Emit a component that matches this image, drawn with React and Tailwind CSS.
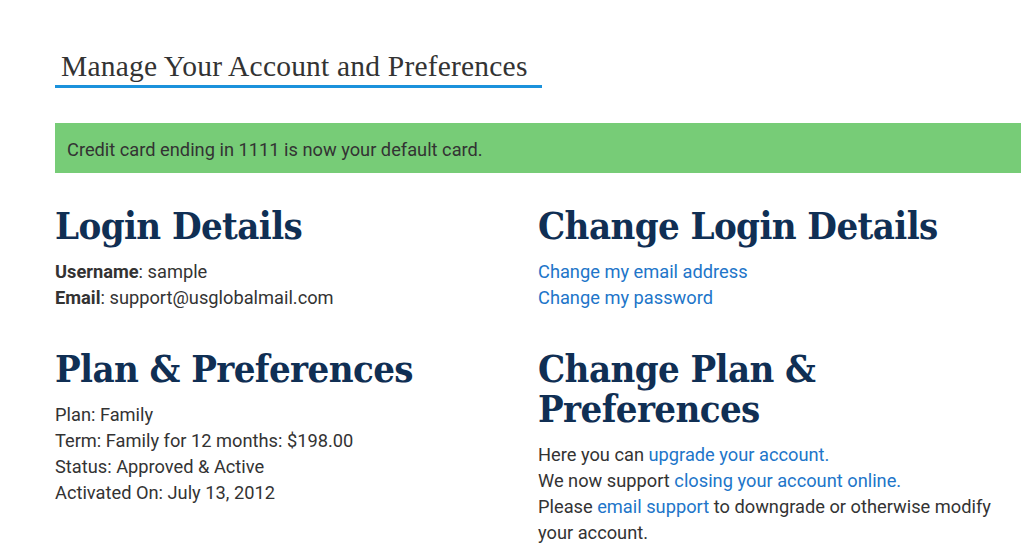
import React from "react";

const heading = "font-['DejaVu_Serif_Condensed','DejaVu_Serif',serif] font-bold text-[#102f54]";
const link = "text-[#2175c9]";

function Section({ title, children }) {
  return (
    <section className="mb-[38px]">
      <h2 className={`${heading} text-[38px] leading-[40px] tracking-[-0.6px]`}>{title}</h2>
      <div className="mt-[13px] text-[18.25px] leading-[26px] text-[#333]">{children}</div>
    </section>
  );
}

export default function App() {
  return (
    <div className="min-h-[560px] bg-white pl-[55px] pr-[5px] pt-[49px] font-['Roboto',sans-serif]">
      <div className="inline-block border-b-[3px] border-[#1b92dc] pl-[6px] pr-[14px] pb-[1px]">
        <h1 className="font-['Liberation_Serif',serif] text-[29.5px] leading-[35px] text-[#333] tracking-[0.2px]">
          Manage Your Account and Preferences
        </h1>
      </div>

      <div className="mt-[35px] bg-[#77cc77] px-[12px] pt-[14px] pb-[10px] text-[18.25px] leading-[26px] text-[#333]">
        Credit card ending in 1111 is now your default card.
      </div>

      <div className="mt-[33px] grid grid-cols-2">
        <div>
          <Section title="Login Details">
            <p>
              <b className="font-bold">Username</b>: sample
            </p>
            <p>
              <b className="font-bold">Email</b>: support@usglobalmail.com
            </p>
          </Section>
          <Section title="Plan & Preferences">
            <p>Plan: Family</p>
            <p>Term: Family for 12 months: $198.00</p>
            <p>Status: Approved &amp; Active</p>
            <p>Activated On: July 13, 2012</p>
          </Section>
        </div>
        <div>
          <Section title="Change Login Details">
            <p>
              <a href="#" className={link}>Change my email address</a>
            </p>
            <p>
              <a href="#" className={link}>Change my password</a>
            </p>
          </Section>
          <Section title={<>Change Plan &amp;<br />Preferences</>}>
            <p>
              Here you can <a href="#" className={link}>upgrade your account.</a>
            </p>
            <p>
              We now support <a href="#" className={link}>closing your account online.</a>
            </p>
            <p className="pr-[20px]">
              Please <a href="#" className={link}>email support</a> to downgrade or otherwise modify your account.
            </p>
          </Section>
        </div>
      </div>
    </div>
  );
}
